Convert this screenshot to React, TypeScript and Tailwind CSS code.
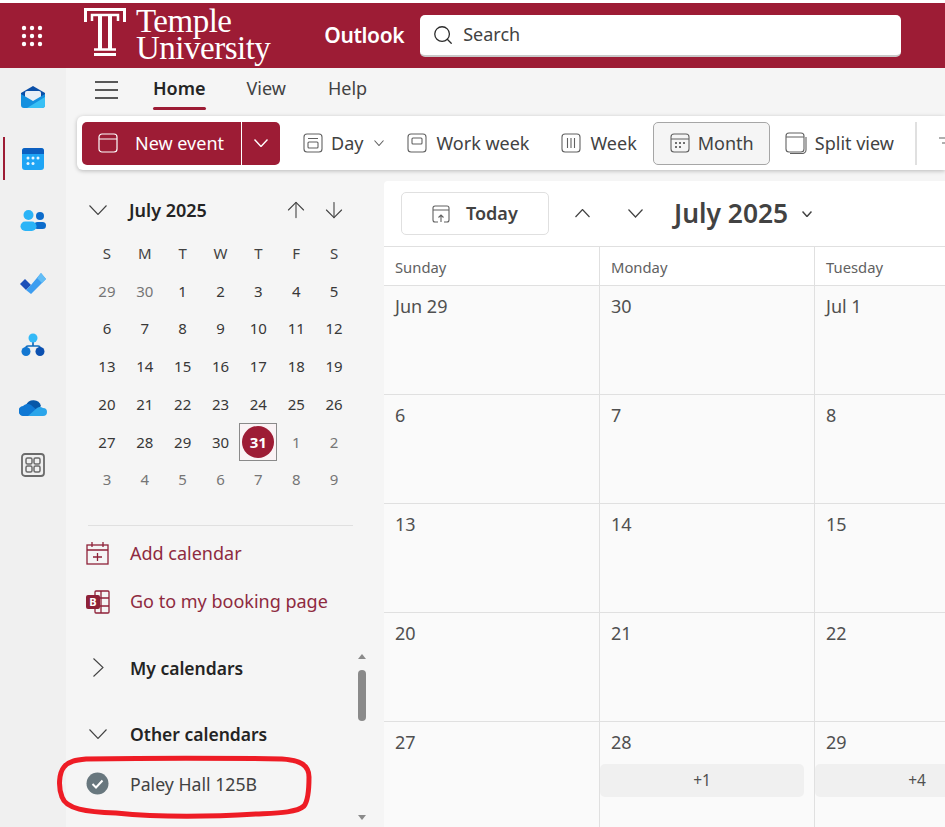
import { ArrowUp, ArrowDown, Search } from "lucide-react";

const font = { fontFamily: '"Noto Sans", "Open Sans", sans-serif' };

const miniWeeks = [
  ["29", "30", "1", "2", "3", "4", "5"],
  ["6", "7", "8", "9", "10", "11", "12"],
  ["13", "14", "15", "16", "17", "18", "19"],
  ["20", "21", "22", "23", "24", "25", "26"],
  ["27", "28", "29", "30", "31", "1", "2"],
  ["3", "4", "5", "6", "7", "8", "9"],
];

const monthRows = [
  ["Jun 29", "30", "Jul 1"],
  ["6", "7", "8"],
  ["13", "14", "15"],
  ["20", "21", "22"],
  ["27", "28", "29"],
];

const more: Record<string, string> = { "28": "+1", "29": "+4" };

const Chev = ({ w, dir, sw = 1.1, color = "#424242" }: { w: number; dir: "up" | "down" | "right"; sw?: number; color?: string }) => {
  const h = w / 2 + 1;
  if (dir === "right") {
    return (
      <svg width={h} height={w} viewBox={`0 0 ${h} ${w}`} fill="none" stroke={color} strokeWidth={sw}>
        <path d={`M0.500 0.500 ${h - 0.5} ${w / 2} 0.500 ${w - 0.5}`} />
      </svg>
    );
  }
  return (
    <svg width={w} height={h} viewBox={`0 0 ${w} ${h}`} fill="none" stroke={color} strokeWidth={sw}>
      <path d={dir === "down" ? `M0.500 0.500 ${w / 2} ${h - 0.5} ${w - 0.5} 0.500` : `M0.500 ${h - 0.5} ${w / 2} 0.500 ${w - 0.5} ${h - 0.5}`} />
    </svg>
  );
};

// waffle dots
const Waffle = () => (
  <svg width="22" height="22" viewBox="0 0 22 22" fill="#fff">
    {[3, 11, 19].map((y) => [3, 11, 19].map((x) => <circle key={`${x}-${y}`} cx={x} cy={y} r="2.2" />))}
  </svg>
);

const TempleT = () => (
  <svg width="42" height="50" viewBox="0 0 42 50" fill="none" stroke="#fff">
    <path d="M1.500 15V2.500h39V15" strokeWidth="3" />
    <path d="M8 14V8h26v6" strokeWidth="2.500" />
    <path d="M16 8v34M26 8v34" strokeWidth="4" />
    <path d="M10 42.500h22" strokeWidth="2.500" />
    <path d="M10 47.500h22" strokeWidth="3" />
  </svg>
);

const MailIcon = () => (
  <svg width="26" height="24" viewBox="0 0 26 24">
    <path d="M13 1 25 8v4H1V8z" fill="#0a4fa8" />
    <rect x="5" y="6" width="16" height="9" rx="2" fill="#e8eef6" />
    <path d="M1 9l12 7 12-7v11a3 3 0 0 1-3 3H4a3 3 0 0 1-3-3z" fill="#1490df" />
    <path d="M7 23l18-11v8a3 3 0 0 1-3 3z" fill="#38c0f5" />
  </svg>
);

const CalIcon = () => (
  <svg width="24" height="24" viewBox="0 0 24 24">
    <rect x="1" y="1" width="22" height="22" rx="3" fill="#1fa5f5" />
    <path d="M1 7V4a3 3 0 0 1 3-3h16a3 3 0 0 1 3 3v3z" fill="#0c5fc0" />
    {[7, 12, 17].map((x) => <circle key={x} cx={x} cy="11" r="1.5" fill="#e6f5ff" />)}
    {[7, 12].map((x) => <circle key={x} cx={x} cy="16.5" r="1.5" fill="#e6f5ff" />)}
  </svg>
);

const PeopleIcon = () => (
  <svg width="26" height="22" viewBox="0 0 26 22">
    <circle cx="20" cy="6" r="4" fill="#0c6ccb" />
    <rect x="14" y="12" width="12" height="7" rx="3.5" fill="#0c6ccb" />
    <circle cx="8.5" cy="5" r="5" fill="#2bb4f7" />
    <rect x="0.5" y="11.5" width="16" height="9.5" rx="4.7" fill="#2bb4f7" />
  </svg>
);

const TodoIcon = () => (
  <svg width="28" height="22" viewBox="0 0 28 22">
    <path d="M1 12l5-5 6 6-5 5z" fill="#1b4fb8" />
    <path d="M7 18l5-5L22 1l5 6L12 22z" fill="#3d9df0" />
    <path d="M18 6l4-5 5 6-4 4z" fill="#63bdf5" />
  </svg>
);

const OrgIcon = () => (
  <svg width="24" height="24" viewBox="0 0 24 24">
    <path d="M12 8v5M5 17v-2a2 2 0 0 1 2-2h10a2 2 0 0 1 2 2v2" stroke="#0f6cbd" strokeWidth="1.7" fill="none" />
    <circle cx="12" cy="5" r="4.5" fill="#33b9f7" />
    <circle cx="5" cy="18.5" r="4.5" fill="#1377d1" />
    <circle cx="19" cy="18.5" r="4.5" fill="#0b50b0" />
  </svg>
);

const CloudIcon = () => (
  <svg width="28" height="18" viewBox="0 0 28 18">
    <path d="M7 7a8 8 0 0 1 15 1l-6 6z" fill="#0757a8" />
    <path d="M5 18a5 5 0 0 1-1-10 6 6 0 0 1 8-1l8 7-4 4z" fill="#0f78d4" />
    <path d="M9 18l9-8a5 5 0 0 1 6 0 4 4 0 0 1 0 8z" fill="#2ba5ea" />
  </svg>
);

const AppsIcon = () => (
  <svg width="24" height="24" viewBox="0 0 24 24" fill="none" stroke="#6b6b6b">
    <rect x="1" y="1" width="22" height="22" rx="3" strokeWidth="1.8" />
    <rect x="5" y="5" width="6" height="6" rx="1.5" strokeWidth="1.5" />
    <rect x="13" y="5" width="6" height="6" rx="1.5" strokeWidth="1.5" />
    <rect x="5" y="13" width="6" height="6" rx="1.5" strokeWidth="1.5" />
    <rect x="13" y="13" width="6" height="6" rx="1.5" strokeWidth="1.5" />
  </svg>
);

const ViewIcon = ({ kind }: { kind: "day" | "work" | "week" | "month" }) => (
  <svg width="20" height="20" viewBox="0 0 20 20" fill="none" stroke="#616161" strokeWidth="1.1">
    <rect x="1" y="1" width="18" height="18" rx="3" />
    {kind === "day" && <><path d="M5 5.500h10" /><rect x="5" y="9" width="10" height="6" rx="1" /></>}
    {kind === "work" && <rect x="5" y="5" width="10" height="6" rx="1" />}
    {kind === "week" && <path d="M6.500 5v10M10 5v10M13.500 5v10" />}
    {kind === "month" && (
      <>
        <path d="M1 6h18" />
        {[6, 10, 14].map((x) => <circle key={x} cx={x} cy="10" r="1" fill="#424242" stroke="none" />)}
        {[6, 10].map((x) => <circle key={x} cx={x} cy="14" r="1" fill="#424242" stroke="none" />)}
      </>
    )}
  </svg>
);

const railIcons = [<MailIcon />, <CalIcon />, <PeopleIcon />, <TodoIcon />, <OrgIcon />, <CloudIcon />];

const App = () => {
  return (
    <div className="w-[945px] h-[827px] overflow-hidden relative flex bg-[#f5f5f5] text-[#242424]" style={font}>
      {/* App rail */}
      <div className="w-[66px] shrink-0 mt-[66px] pt-0 bg-[#f0f0f0] flex flex-col items-center relative">
        {railIcons.map((icon, i) => (
          <div key={i} className="h-[62px] flex items-center justify-center">{icon}</div>
        ))}
        <div className="h-[54px] flex items-center justify-center"><AppsIcon /></div>
        <div className="absolute left-[3px] top-[71px] w-[2px] h-[43px] bg-[#9d1c35]" />
      </div>

      {/* Header */}
      <div className="absolute left-0 right-0 top-0 h-[68px] border-t-[3px] border-white bg-[#9d1c35] flex items-center text-white">
        <div className="ml-[21px]"><Waffle /></div>
        <div className="ml-[41px] mb-[8px]"><TempleT /></div>
        <div className="ml-[10px] leading-[27px] text-[33px] tracking-[-0.5px] mb-[1px]" style={{ fontFamily: '"Liberation Serif", serif' }}>
          <div>Temple</div>
          <div>University</div>
        </div>
        <span className="ml-[54px] text-[21px] font-semibold tracking-[-0.4px]">Outlook</span>
        <div className="ml-[16px] w-[481px] h-[42px] rounded-[5px] bg-white border-b-2 border-[#c9c9c9] flex items-center pl-[12px] gap-[9px] text-[#424242] text-[18px]">
          <Search className="w-[22px] h-[22px] text-[#2b2b2b]" strokeWidth={1.4} />
          Search
        </div>
      </div>

      <div className="flex-1 min-w-0 mt-[68px] flex flex-col">
        {/* Tabs */}
        <div className="h-[48px] pb-[8px] shrink-0 flex items-center text-[18px] text-[#424242] bg-[#f5f5f5]">
          <svg className="ml-[29px] mt-[4px]" width="23" height="18" viewBox="0 0 23 18" stroke="#242424" strokeWidth="1.3">
            <path d="M0 1h23M0 9h23M0 17h23" />
          </svg>
          <div className="ml-[35px] relative font-semibold text-[#242424]">
            Home
            <div className="absolute left-0 right-0 -bottom-[8px] h-[3px] rounded-full bg-[#9d1c35]" />
          </div>
          <span className="ml-[41px]">View</span>
          <span className="ml-[42px]">Help</span>
        </div>

        {/* Ribbon */}
        <div className="h-[54px] shrink-0 ml-[11px] bg-white rounded-l-[6px] shadow-[0_1px_4px_rgba(0,0,0,0.25)] flex items-center pl-[5px] text-[18px] text-[#424242] whitespace-nowrap relative z-10 overflow-hidden [&>*]:shrink-0">
          <div className="h-[43px] w-[198px] rounded-[5px] bg-[#9d1c35] text-white flex items-center">
            <svg className="ml-[16px]" width="20" height="20" viewBox="0 0 20 20" fill="none" stroke="#fff" strokeWidth="1.2">
              <rect x="1" y="1" width="18" height="18" rx="3" />
              <path d="M1 6h18" />
            </svg>
            <span className="ml-[17px]">New event</span>
            <div className="ml-auto w-[39px] h-full border-l border-white flex items-center justify-center">
              <Chev w={14} dir="down" sw={1.4} color="#fff" />
            </div>
          </div>
          <div className="ml-[23px]"><ViewIcon kind="day" /></div>
          <span className="ml-[8px]">Day</span>
          <div className="ml-[11px]"><Chev w={10} dir="down" sw={1.1} color="#616161" /></div>
          <div className="ml-[23px]"><ViewIcon kind="work" /></div>
          <span className="ml-[9px]">Work week</span>
          <div className="ml-[32px]"><ViewIcon kind="week" /></div>
          <span className="ml-[9px]">Week</span>
          <div className="ml-[16px] w-[117px] h-[43px] rounded-[5px] border border-[#a6a6a6] bg-[#f5f5f5] flex items-center pl-[16px] gap-[8px]">
            <ViewIcon kind="month" />
            Month
          </div>
          <svg className="ml-[15px]" width="22" height="22" viewBox="0 0 22 22" fill="none" stroke="#616161" strokeWidth="1.1">
            <rect x="1" y="1" width="18" height="19" rx="3" />
            <path d="M1 5h18" />
            <path d="M21 5v13a3.500 3.500 0 0 1-3.500 3.500H5" />
          </svg>
          <span className="ml-[8px]">Split view</span>
          <div className="ml-[21px] w-[2px] h-[43px] bg-[#e0e0e0]" />
          <svg className="ml-[21px]" width="20" height="20" viewBox="0 0 20 20" fill="none" stroke="#616161" strokeWidth="1.2">
            <path d="M1 5h18M4 10h12M8 15h4" />
          </svg>
        </div>

        <div className="flex-1 min-h-0 flex mt-[11px]">
          {/* Left pane */}
          <div className="w-[318px] shrink-0 relative">
            <div className="w-[265px] ml-[22px]">
              <div className="h-[36px] mt-[11px] flex items-center">
                <div className="ml-[1px]"><Chev w={18} dir="down" /></div>
                <span className="ml-[22px] text-[18px] font-semibold">July 2025</span>
                <ArrowUp className="ml-auto mr-[12px] w-[26px] h-[26px] text-[#424242]" strokeWidth={1} />
                <ArrowDown className="mr-[6px] w-[26px] h-[26px] text-[#424242]" strokeWidth={1} />
              </div>
              <div className="mt-[6.500px] grid grid-cols-7 text-[15px] text-[#424242]">
                {["S", "M", "T", "W", "T", "F", "S"].map((d, i) => (
                  <div key={i} className="h-[37.700px] flex items-center justify-center">{d}</div>
                ))}
                {miniWeeks.flatMap((week, w) =>
                  week.map((d, i) => {
                    const isToday = w === 4 && i === 4;
                    const muted = (w === 0 && i < 2) || (w === 4 && i > 4) || w === 5;
                    return (
                      <div key={`${w}-${i}`} className="h-[37.700px] flex items-center justify-center">
                        {isToday ? (
                          <div className="w-[38px] h-[38px] border border-[#8a8a8a] bg-[#faf3f5] flex items-center justify-center">
                            <div className="w-[32px] h-[32px] rounded-full bg-[#9d1c35] text-white font-bold flex items-center justify-center">{d}</div>
                          </div>
                        ) : (
                          <span className={muted ? "text-[#757575]" : "text-[#383838]"}>{d}</span>
                        )}
                      </div>
                    );
                  })
                )}
              </div>
              <div className="mt-[26.500px] h-px bg-[#e0e0e0]" />
            </div>

            <div className="mt-[4px] ml-[20px] flex flex-col text-[18px] text-[#8e2a40]">
              <div className="h-[48px] flex items-center gap-[21px]">
                <svg width="23" height="23" viewBox="0 0 23 23" fill="none" stroke="#8e2138" strokeWidth="1.3">
                  <rect x="1" y="3" width="21" height="19" />
                  <path d="M1 8h21M6 0v5M17 0v5M11.500 11v8M7 15h9" />
                </svg>
                Add calendar
              </div>
              <div className="h-[48px] flex items-center gap-[20px]">
                <svg width="24" height="24" viewBox="0 0 24 24" fill="none" stroke="#8e2138" strokeWidth="1.3">
                  <rect x="9" y="1" width="14" height="22" rx="1" />
                  <path d="M15 1v22M9 8h14M9 16h14" />
                  <rect x="0" y="5" width="14" height="14" rx="2" fill="#8e2138" stroke="none" />
                  <text x="7" y="16" textAnchor="middle" fontSize="11" fontWeight="700" fill="#fff" stroke="none">B</text>
                </svg>
                Go to my booking page
              </div>
            </div>

            <div className="mt-[21px] h-[42px] flex items-center text-[#242424]">
              <div className="ml-[27px] w-[37px]"><Chev w={19} dir="right" /></div>
              <span className="text-[17.500px] font-semibold">My calendars</span>
            </div>
            <div className="mt-[24px] h-[42px] flex items-center text-[#242424]">
              <div className="ml-[23px] w-[41px]"><Chev w={18} dir="down" /></div>
              <span className="text-[17.500px] font-semibold">Other calendars</span>
            </div>
            <div className="ml-[20px] mt-[4px] h-[50px] flex items-center text-[#424242] text-[17.700px]">
              <svg width="23" height="23" viewBox="0 0 23 23">
                <circle cx="11.500" cy="11.500" r="11" fill="#68777e" />
                <path d="M6.500 12l3.500 3.500 6.500-7" stroke="#fff" strokeWidth="2" fill="none" />
              </svg>
              <span className="ml-[21px]">Paley Hall 125B</span>
            </div>

            {/* Scrollbar */}
            <div className="absolute left-[292px] top-[473px] w-0 h-0 border-x-[4px] border-x-transparent border-b-[5px] border-b-[#8a8a8a]" />
            <div className="absolute left-[292px] top-[489px] w-[8px] h-[51px] rounded-full bg-[#8a8a8a]" />
            <div className="absolute left-[292px] top-[634px] w-0 h-0 border-x-[4px] border-x-transparent border-t-[5px] border-t-[#8a8a8a]" />
          </div>

          {/* Month view */}
          <div className="flex-1 min-w-0 bg-white rounded-tl-[4px] flex flex-col">
            <div className="h-[65px] shrink-0 flex items-center pl-[17px] text-[#424242]">
              <div className="shrink-0 w-[148px] h-[43px] rounded-[5px] border border-[#e0e0e0] flex items-center pl-[30px] gap-[16px]">
                <svg width="18" height="18" viewBox="0 0 18 18" fill="none" stroke="#616161" strokeWidth="1.1">
                  <path d="M6 17H3a2 2 0 0 1-2-2V3a2 2 0 0 1 2-2h12a2 2 0 0 1 2 2v12a2 2 0 0 1-2 2h-3" />
                  <path d="M1 5h16M9 17V10M6.500 12.500 9 10l2.500 2.500" />
                </svg>
                <span className="text-[18px] font-semibold">Today</span>
              </div>
              <div className="ml-[26px]"><Chev w={15} dir="up" sw={1.2} /></div>
              <div className="ml-[38px]"><Chev w={15} dir="down" sw={1.2} /></div>
              <span className="ml-[31px] text-[26.400px] font-semibold">July 2025</span>
              <div className="ml-[14px]"><Chev w={10} dir="down" sw={1.5} /></div>
            </div>

            <div className="grid grid-cols-[216px_215px_215px] text-[14.800px] text-[#616161] border-y border-[#e0e0e0] h-[40px] shrink-0">
              {["Sunday", "Monday", "Tuesday"].map((d) => (
                <div key={d} className="pl-[11px] pt-[3px] flex items-center border-r border-[#e0e0e0] last:border-r-0">{d}</div>
              ))}
            </div>

            <div className="flex-1 min-h-0 bg-[#fafafa]">
              {monthRows.map((row) => (
                <div key={row[0]} className="grid grid-cols-[216px_215px_215px] h-[109px] border-b border-[#e0e0e0]">
                  {row.map((d, i) => (
                    <div key={d} className="border-r border-[#e0e0e0] last:border-r-0 pt-[7px] text-[#505050] text-[18px]">
                      <div className="pl-[11px] leading-[27px]">{d}</div>
                      {i > 0 && more[d] && (
                        <div className="mt-[8px] w-[204px] h-[33px] rounded-[5px] bg-[#f0f0f0] flex items-center justify-center text-[15.500px] text-[#505050]">
                          {more[d]}
                        </div>
                      )}
                    </div>
                  ))}
                </div>
              ))}
            </div>
          </div>
        </div>
      </div>

      {/* Hand-drawn highlight round the calendar */}
      <svg className="absolute left-[56px] top-[753px]" width="258" height="68" viewBox="0 0 258 68" fill="none">
        <path
          d="M30 6C90 5 170 5 226 6C244 7 253 12 253 24C253 38 252 48 248 53C240 60 220 60 200 61C150 64 100 64 60 60C30 59 10 56 6 44C2 34 3 20 8 14C13 8 20 7 30 6Z"
          stroke="#ee1c25"
          strokeWidth="5"
        />
      </svg>
    </div>
  );
};

export default App;
